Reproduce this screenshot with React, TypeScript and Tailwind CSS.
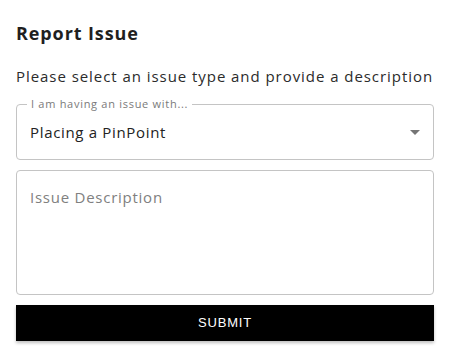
import { useState } from 'react';

const ISSUE_TYPES = ['Placing a PinPoint', 'Viewing the map', 'Account access', 'Other'];

export default function App() {
  const [issueType, setIssueType] = useState(ISSUE_TYPES[0]);
  const [description, setDescription] = useState('');

  return (
    <main
      className="w-[450px] h-[357px] bg-white px-4 pt-[21px] text-[#222]"
      style={{ fontFamily: '"Open Sans", "Noto Sans", sans-serif' }}
    >
      <h2 className="text-[18px] font-bold leading-[24px] tracking-[0.05em] text-[#1f1f1f]">Report Issue</h2>

      <p className="mt-[21px] text-[15px] leading-[20px] tracking-[0.063em] text-[#2b2b2b] whitespace-nowrap">
        Please select an issue type and provide a description
      </p>

      {/* Issue type select with notched label */}
      <div className="relative mt-[18px] h-[56px] rounded-[4px] border border-[#c4c4c4]">
        <span className="absolute left-[10px] top-[-8px] bg-white px-[4px] text-[11px] leading-[14px] tracking-[0.065em] text-[#7a7a7a]">
          I am having an issue with...
        </span>
        <select
          value={issueType}
          onChange={(e) => setIssueType(e.target.value)}
          className="h-full w-full appearance-none bg-transparent pl-[13px] pr-10 text-[15px] tracking-[0.045em] text-[#222] outline-none"
        >
          {ISSUE_TYPES.map((t) => (
            <option key={t} value={t}>
              {t}
            </option>
          ))}
        </select>
        <svg
          className="pointer-events-none absolute right-[13px] top-[25px]"
          width="10"
          height="5"
          viewBox="0 0 10 5"
        >
          <path d="M0 0 L10 0 L5 5 Z" fill="#757575" />
        </svg>
      </div>

      {/* Description */}
      <textarea
        value={description}
        onChange={(e) => setDescription(e.target.value)}
        placeholder="Issue Description"
        className="mt-[10px] block h-[125px] w-full resize-none rounded-[4px] border border-[#c4c4c4] px-[13px] pt-[16px] text-[15px] leading-[20px] tracking-[0.05em] text-[#222] outline-none placeholder:text-[#808080]"
      />

      <button
        type="button"
        className="mt-[10px] block h-[36px] w-full bg-black text-[13px] font-medium uppercase tracking-[0.06em] text-white shadow-[0_2px_3px_rgba(0,0,0,0.25)]"
        style={{ fontFamily: '"Liberation Sans", Arial, sans-serif' }}
      >
        Submit
      </button>
    </main>
  );
}
